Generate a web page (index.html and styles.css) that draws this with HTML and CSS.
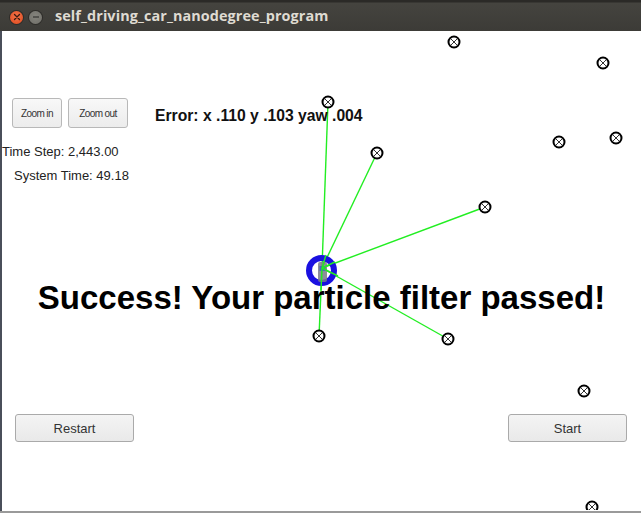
FILE: index.html
```html
<!DOCTYPE html>
<html>
<head>
<meta charset="utf-8">
<link rel="stylesheet" href="styles.css">
</head>
<body>
<div class="window">
  <div class="titlebar">
    <span class="wbtn close"><svg width="8" height="8" viewBox="0 0 8 8"><path d="M1.5 1.5 L6.5 6.5 M6.5 1.5 L1.5 6.5" stroke="#3a1a10" stroke-width="1.3" stroke-linecap="round"/></svg></span>
    <span class="wbtn min"><svg width="8" height="8" viewBox="0 0 8 8"><path d="M1 4 H7" stroke="#3a3a36" stroke-width="1.3"/></svg></span>
    <span class="title">self_driving_car_nanodegree_program</span>
  </div>
  <div class="content">
    <svg class="canvas" width="639" height="479" viewBox="2 31 639 479">
      <g stroke="#22ee22" stroke-width="1.4">
        <line x1="322" y1="268" x2="328" y2="102"/>
        <line x1="322" y1="268" x2="377" y2="153"/>
        <line x1="322" y1="268" x2="485" y2="207"/>
        <line x1="322" y1="268" x2="319" y2="336"/>
        <line x1="322" y1="268" x2="448" y2="339"/>
      </g>
      <g class="car">
        <circle cx="321.5" cy="270.5" r="12.5" fill="none" stroke="#1a10e0" stroke-width="6"/>
        <rect x="318" y="262" width="9" height="20" rx="2" fill="#7a7a8a" opacity="0.85"/>
        <rect x="319.5" y="266" width="6" height="5" fill="#3050d0" opacity="0.7"/>
        <g stroke="#22ee22" stroke-width="1.4">
          <line x1="322" y1="268" x2="326" y2="255"/>
          <line x1="322" y1="268" x2="335" y2="262"/>
          <line x1="322" y1="268" x2="338" y2="276"/>
          <line x1="322" y1="268" x2="321" y2="290"/>
        </g>
      </g>
      <g class="lm" fill="#fff" stroke="#000">
        <g transform="translate(454 42)"><circle r="5.5" stroke-width="2"/><path d="M-3 -3 L3 3 M3 -3 L-3 3" stroke-width="0.8"/></g>
        <g transform="translate(603 63)"><circle r="5.5" stroke-width="2"/><path d="M-3 -3 L3 3 M3 -3 L-3 3" stroke-width="0.8"/></g>
        <g transform="translate(328 102)"><circle r="5.5" stroke-width="2"/><path d="M-3 -3 L3 3 M3 -3 L-3 3" stroke-width="0.8"/></g>
        <g transform="translate(559 142)"><circle r="5.5" stroke-width="2"/><path d="M-3 -3 L3 3 M3 -3 L-3 3" stroke-width="0.8"/></g>
        <g transform="translate(616 138)"><circle r="5.5" stroke-width="2"/><path d="M-3 -3 L3 3 M3 -3 L-3 3" stroke-width="0.8"/></g>
        <g transform="translate(377 153)"><circle r="5.5" stroke-width="2"/><path d="M-3 -3 L3 3 M3 -3 L-3 3" stroke-width="0.8"/></g>
        <g transform="translate(485 207)"><circle r="5.5" stroke-width="2"/><path d="M-3 -3 L3 3 M3 -3 L-3 3" stroke-width="0.8"/></g>
        <g transform="translate(319 336)"><circle r="5.5" stroke-width="2"/><path d="M-3 -3 L3 3 M3 -3 L-3 3" stroke-width="0.8"/></g>
        <g transform="translate(448 339)"><circle r="5.5" stroke-width="2"/><path d="M-3 -3 L3 3 M3 -3 L-3 3" stroke-width="0.8"/></g>
        <g transform="translate(584 391)"><circle r="5.5" stroke-width="2"/><path d="M-3 -3 L3 3 M3 -3 L-3 3" stroke-width="0.8"/></g>
        <g transform="translate(592 507)"><circle r="5.5" stroke-width="2"/><path d="M-3 -3 L3 3 M3 -3 L-3 3" stroke-width="0.8"/></g>
      </g>
    </svg>
    <div class="toprow">
      <div class="zoombtns">
        <button class="zbtn zin">Zoom in</button>
        <button class="zbtn zout">Zoom out</button>
      </div>
      <div class="error">Error: x .110 y .103 yaw .004</div>
    </div>
    <div class="timestep">Time Step: 2,443.00</div>
    <div class="systime">System Time: 49.18</div>
    <div class="success">Success! Your particle filter passed!</div>
    <div class="bottomrow">
      <button class="bbtn">Restart</button>
      <button class="bbtn">Start</button>
    </div>
  </div>
  <div class="bottomline"></div>
</div>
</body>
</html>
```
FILE: styles.css
```css
html, body {
  margin: 0;
  padding: 0;
  width: 641px;
  height: 513px;
  overflow: hidden;
  background: #fff;
}
.window {
  display: flex;
  flex-direction: column;
  width: 641px;
  height: 513px;
  font-family: "Liberation Sans", Arial, sans-serif;
}
.titlebar {
  height: 31px;
  flex: none;
  display: flex;
  align-items: center;
  padding: 3px 0 0 10px;
  box-sizing: border-box;
  background: linear-gradient(#2b2a27 0, #2b2a27 2px, #45443f 3px, #3c3b37 31px);
}
.wbtn {
  width: 13px;
  height: 13px;
  border-radius: 50%;
  display: flex;
  align-items: center;
  justify-content: center;
  margin-right: 6px;
}
.close {
  background: radial-gradient(circle at 50% 40%, #f2744a, #e0481c);
  box-shadow: 0 0 0 1px #2e2d2a;
}
.min {
  background: radial-gradient(circle at 50% 40%, #85847d, #6f6e68);
  box-shadow: 0 0 0 1px #2e2d2a;
  margin-right: 13px;
}
.title {
  color: #dfdbd2;
  font-family: "Open Sans", "DejaVu Sans", sans-serif;
  font-weight: 700;
  font-size: 14.4px;
  letter-spacing: 0.1px;
  position: relative;
  top: -2px;
}
.content {
  flex: 1;
  position: relative;
  background: #fff;
  border-left: 2px solid #4a4f5a;
  display: flex;
  flex-direction: column;
}
.canvas {
  position: absolute;
  left: 0;
  top: 0;
}
.toprow {
  position: relative;
  display: flex;
  align-items: flex-start;
  margin-top: 67px;
  padding-left: 10px;
}
.zoombtns {
  display: flex;
  gap: 6px;
}
.zbtn {
  height: 30px;
  box-sizing: border-box;
  border: 1px solid #b8b8b8;
  border-radius: 3px;
  background: linear-gradient(#f8f8f8, #ececec);
  font-family: "Liberation Sans", Arial, sans-serif;
  font-size: 10px;
  color: #333;
  padding: 0;
  letter-spacing: -0.6px;
}
.zin { width: 50px; }
.zout { width: 60px; }
.error {
  margin-left: 27px;
  margin-top: 9px;
  font-weight: 700;
  font-size: 15.7px;
  color: #111;
}
.timestep {
  position: relative;
  margin-left: 0;
  margin-top: 16px;
  font-size: 13px;
  color: #222;
}
.systime {
  position: relative;
  margin-left: 12px;
  margin-top: 9px;
  font-size: 13px;
  color: #222;
}
.success {
  position: relative;
  margin-top: 96px;
  text-align: center;
  font-weight: 700;
  font-size: 33px;
  color: #000;
  padding-right: 0;
}
.bottomrow {
  position: relative;
  display: flex;
  justify-content: space-between;
  margin-top: 97px;
  padding: 0 14px 0 13px;
}
.bbtn {
  width: 119px;
  height: 28px;
  box-sizing: border-box;
  border: 1px solid #aaa;
  border-radius: 3px;
  background: linear-gradient(#f4f4f4, #e9e9e9);
  font-family: "Liberation Sans", Arial, sans-serif;
  font-size: 13px;
  color: #333;
  padding: 0;
}
.bottomline {
  height: 2px;
  flex: none;
  background: #9a9a9a;
}
```
